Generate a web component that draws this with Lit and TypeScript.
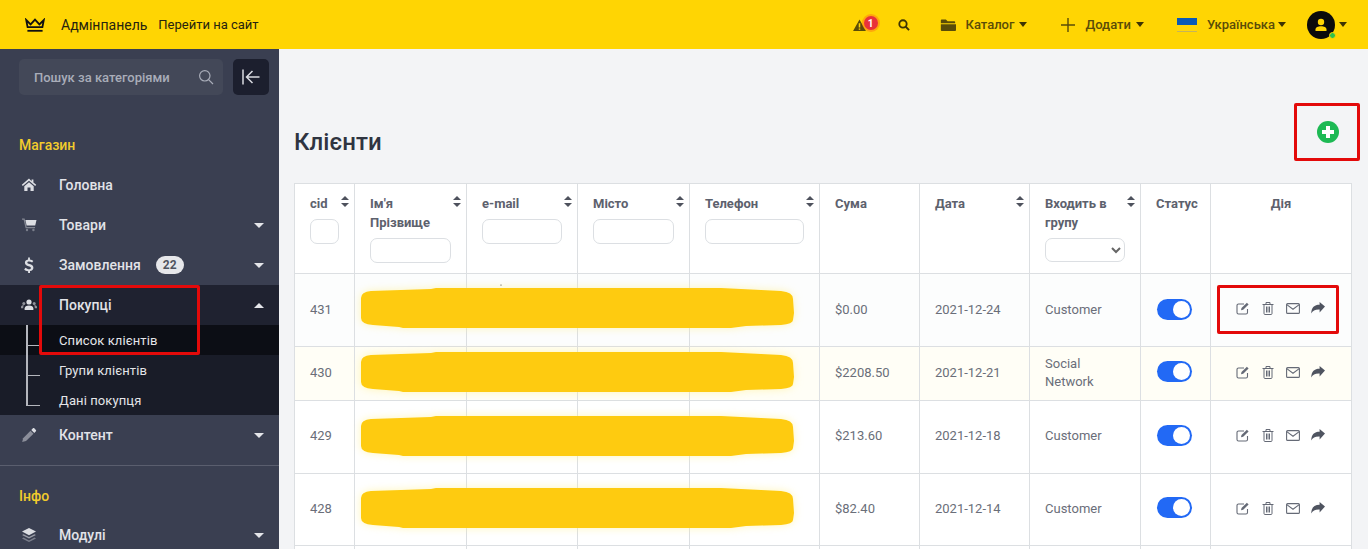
import { LitElement, html, css, svg } from "lit";
import { customElement } from "lit/decorators.js";

const icons: Record<string, unknown> = {
  home: svg`<path d="M8 1.600 0.800 7.800l1 1.100L8 3.700l6.200 5.200 1-1.100-2.800-2.400V2.400h-1.800v1.900z" fill="currentColor"/><path d="M3.300 9.200 8 5.300l4.700 3.900V14H9.500v-3.400h-3V14H3.300z" fill="currentColor"/>`,
  cart: svg`<path d="M1 1.500h2.600l2 8.500h8.400v1.200H4.600L2.600 2.700H1z" fill="currentColor" opacity=".45"/><path d="M4.400 3H15.500l-1.300 5.600H5.600z" fill="currentColor"/><circle cx="6" cy="13" r="1.200" fill="currentColor" opacity=".4"/><circle cx="12.400" cy="13" r="1.200" fill="currentColor" opacity=".4"/>`,
  dollar: svg`<path d="M7.100 0.600h1.800v1.900c1.500.2 2.700.8 3.400 1.500l-1.200 1.600c-.9-.7-2-1.200-3.100-1.200-1 0-1.700.4-1.700 1.100 0 .8.8 1.100 2.300 1.600 2.100.7 3.800 1.500 3.800 3.600 0 1.800-1.300 3-3.400 3.400v2.100H7.100v-2c-1.600-.2-3-.9-3.900-1.800l1.300-1.700c1 .9 2.300 1.500 3.500 1.500 1.100 0 1.900-.5 1.900-1.300 0-.9-.9-1.200-2.400-1.700-2-.7-3.600-1.500-3.600-3.500 0-1.700 1.200-2.900 3.200-3.200z" fill="currentColor"/>`,
  users: svg`<circle cx="8" cy="5" r="2.600" fill="currentColor"/><path d="M3.600 13v-1.600C3.600 9.400 5.400 8.400 8 8.400s4.400 1 4.400 3V13z" fill="currentColor"/><circle cx="2.800" cy="6.400" r="1.500" fill="currentColor" opacity=".6"/><circle cx="13.200" cy="6.400" r="1.500" fill="currentColor" opacity=".6"/><path d="M0 11.200V9.900c0-1 1-1.600 2.900-1.600-.4.5-.6 1.100-.7 2.900zM16 11.200V9.900c0-1-1-1.600-2.900-1.600.4.5.6 1.100.7 2.900z" fill="currentColor" opacity=".6"/>`,
  pencil: svg`<path d="M1.200 15l.9-3.800 7.400-7.500 3 3-7.500 7.400z" fill="currentColor" opacity=".5"/><path d="M10.300 2.900l1.600-1.600c.4-.4 1-.4 1.400 0l1.600 1.600c.4.4.4 1 0 1.400l-1.600 1.600z" fill="currentColor"/>`,
  layers: svg`<path d="M8 1 15 4.600 8 8.200 1 4.600z" fill="currentColor"/><path d="M2.600 7.200 1 8l7 3.600L15 8l-1.600-.8L8 10z" fill="currentColor" opacity=".6"/><path d="M2.600 10.600 1 11.400 8 15l7-3.600-1.600-.8L8 13.400z" fill="currentColor" opacity=".4"/>`,
};

const groups = [
  { label: "Головна", icon: "home" },
  { label: "Товари", icon: "cart", caret: "down" },
  { label: "Замовлення", icon: "dollar", caret: "down", badge: "22" },
  { label: "Покупці", icon: "users", caret: "up", open: true },
];

const rows = [
  { cls: "r1", cid: "431", sum: "$0.00", date: "2021-12-24", grp: "Customer", dot: true },
  { cls: "r2", cid: "430", sum: "$2208.50", date: "2021-12-21", grp: "Social Network" },
  { cls: "r3", cid: "429", sum: "$213.60", date: "2021-12-18", grp: "Customer" },
  { cls: "r3 r4", cid: "428", sum: "$82.40", date: "2021-12-14", grp: "Customer" },
];

const cols = [60, 112, 111, 112, 130, 100, 110, 111, 70, 141];

@customElement("app-root")
export class AppRoot extends LitElement {
  static styles = css`
    :host { display: block; position: relative; height: 549px; overflow: hidden; font-family: Roboto, "Noto Sans", sans-serif; background: #f3f4f6; }
    * { box-sizing: border-box; }
    svg { display: block; flex: none; }
    .top { height: 49px; background: #ffd503; display: flex; align-items: center; color: #2b2500; }
    .crown { margin-left: 25px; margin-right: 16px; }
    .brand { font-size: 14px; color: #26230f; margin-right: 11px; }
    .visit { font-size: 13px; color: #26230f; }
    .right { margin-left: auto; display: flex; align-items: center; padding-right: 21px; color: #5a4c08; font-size: 13px; font-weight: 500; }
    .alert { display: flex; margin-right: 19px; position: relative; width: 26px; height: 15px; }
    .count { position: absolute; left: 11px; top: -1px; width: 14px; height: 14px; border-radius: 50%; background: #e8323a; color: #fff; font-size: 10px; font-weight: 700; display: flex; align-items: center; justify-content: center; box-shadow: 0 0 0 2px rgba(255, 130, 20, .55); }
    .mag { margin-right: 30px; color: #3d3303; }
    .folder { margin-right: 10px; }
    .caret { width: 0; height: 0; border-left: 4px solid transparent; border-right: 4px solid transparent; border-top: 5px solid #3d3303; margin-left: 5px; }
    .catalog { margin-right: 34px; }
    .cat { display: flex; align-items: center; }
    .plus { margin-right: 10px; }
    .flag { width: 20px; height: 14px; margin-right: 10px; margin-left: 33px; display: flex; flex-direction: column; }
    .flag i { display: block; height: 7px; background: #0a5ab8; }
    .flag b { display: block; height: 7px; background: #ffd60a; border-bottom: 1px solid #c5b45a; }
    .lang .caret { margin-left: 3px; }
    .avatar { margin-left: 21px; width: 28px; height: 28px; border-radius: 50%; background: #0b0b0b; position: relative; display: flex; align-items: center; justify-content: center; }
    .online { position: absolute; right: -1px; bottom: 0; width: 7px; height: 7px; border-radius: 50%; background: #2fc24c; border: 1px solid #ffd503; }
    .avcaret { margin-left: 4px; }

    .body { display: flex; height: 500px; }
    .side { width: 279px; flex: none; background: #3a3f51; color: #e4e5e9; overflow: hidden; }
    .searchrow { display: flex; gap: 10px; padding: 10px 10px 0 19px; }
    .search { flex: 1; height: 36px; background: #434858; border-radius: 5px; display: flex; align-items: center; justify-content: space-between; padding: 0 9px 0 15px; font-size: 13px; font-weight: 500; color: #a9adb9; }
    .collapse { width: 36px; height: 36px; border-radius: 5px; background: #1c1f2e; display: flex; align-items: center; justify-content: center; color: #d9dbe1; }
    .sect { padding-left: 19px; color: #f2cc2c; font-size: 14px; font-weight: 500; height: 20px; line-height: 20px; }
    .sect.first { margin-top: 40px; margin-bottom: 10px; }
    .sect.second { margin-top: 20px; margin-bottom: 9px; }
    .item { height: 40px; display: flex; align-items: center; padding-left: 21px; font-size: 14px; font-weight: 500; color: #e2e3e8; }
    .item.open { background: #1f2230; }
    .item .ic { width: 16px; margin-right: 22px; color: #dcdee3; }
    .badge { margin-left: 15px; width: 28px; height: 18px; line-height: 18px; text-align: center; font-size: 12px; font-weight: 700; background: #e6e7ea; color: #50545f; border-radius: 9px; }
    .arr { margin-left: auto; margin-right: 15px; width: 0; height: 0; border-left: 5px solid transparent; border-right: 5px solid transparent; }
    .arr.down { border-top: 5px solid #e4e5e9; }
    .arr.up { border-bottom: 5px solid #e4e5e9; }
    .subs { background: #191c28; }
    .sub { height: 30px; display: flex; align-items: center; padding-left: 59px; font-size: 13px; color: #e4e5e9; position: relative; letter-spacing: .1px; }
    .sub.on { background: #0c0e15; }
    .sub::before { content: ""; position: absolute; left: 26px; top: 0; width: 12px; height: 20px; border-left: 2px solid #b4b6bd; border-bottom: 1px solid #b4b6bd; }
    .sub:not(:last-child)::after { content: ""; position: absolute; left: 26px; top: 20px; height: 10px; border-left: 2px solid #b4b6bd; }
    .rule { height: 1px; background: #5a5e6e; margin-top: 10px; }

    .main { flex: 1; min-width: 0; padding: 54px 8px 0 15px; position: relative; }
    .head { height: 58px; display: flex; justify-content: space-between; margin-bottom: 22px; }
    h1 { margin: 0; align-self: flex-end; font-size: 24px; line-height: 28px; font-weight: 500; color: #2f3441; padding-bottom: 5px; letter-spacing: .05px; }
    .add { width: 66px; height: 58px; border: 3px solid #e30a0a; border-radius: 2px; display: flex; justify-content: center; padding: 15px 0 0 2px; }
    table { border-collapse: collapse; table-layout: fixed; width: 1057px; background: #fff; font-size: 13px; color: #6a6e79; }
    th, td { border: 1px solid #dcdfe2; }
    th { height: 90px; vertical-align: top; text-align: left; padding: 10px 15px 0 15px; font-weight: 700; line-height: 19px; color: #5d616d; position: relative; }
    th.center { text-align: center; }
    .sort { position: absolute; right: 5px; top: 12px; }
    th input, th select { display: block; width: 100%; height: 25px; margin-top: 6px; border: 1px solid #dcdfe3; border-radius: 7px; background: #fff; padding: 0; color: #666; }
    th select { height: 24px; }
    td { padding: 0 14px 0 15px; line-height: 18px; }
    tr.r1 { height: 73px; background: #fcfdfd; }
    tr.r2 { height: 54px; background: #fffef6; }
    tr.r3 { height: 73px; background: #fff; }
    tr.r4 { height: 72px; }
    tr.r2 td, tr.r3 td { padding-bottom: 2px; }
    tr.blank { height: 40px; }
    .name { position: relative; }
    .ink { position: absolute; left: 6px; top: 50%; margin-top: -22.500px; overflow: visible; filter: drop-shadow(0 0 4px rgba(255, 240, 140, .6)); }
    tr.r1 .ink { margin-top: -23.500px; }
    .tog { width: 35px; height: 21px; border-radius: 11px; background: #2269f5; position: relative; margin: -2px auto 0; }
    .tog::after { content: ""; position: absolute; right: 2px; top: 2px; width: 17px; height: 17px; border-radius: 50%; background: #fff; }
    td.togcell { padding: 0 9px 0 7px; }
    .acts { display: flex; align-items: center; color: #656a76; padding-left: 10px; gap: 11px; margin-bottom: 2px; }
    tr.r1 .acts { margin-bottom: 4px; }
    .redbox { position: absolute; border: 3px solid #e30a0a; border-radius: 2px; pointer-events: none; }
    .redbox.nav { left: 39px; top: 285px; width: 161px; height: 70px; }
    .redbox.action { left: 938px; top: 236px; width: 122px; height: 49px; }
  `;

  private sortIcon() {
    return html`<svg class="sort" width="8" height="11" viewBox="0 0 8 11"><path d="M4 0l4 4H0zM4 11 0 7h8z" fill="#4e525d"/></svg>`;
  }

  private sidebarItem(it: any) {
    return html`<div class="item ${it.open ? "open" : ""}">
      <svg class="ic" width="16" height="16" viewBox="0 0 16 16">${icons[it.icon]}</svg>
      <span>${it.label}</span>
      ${it.badge ? html`<span class="badge">${it.badge}</span>` : ""}
      ${it.caret ? html`<span class="arr ${it.caret}"></span>` : ""}
    </div>`;
  }

  private actions() {
    return html`<div class="acts">
      <svg width="14" height="14" viewBox="0 0 14 14" fill="none" stroke="currentColor" stroke-width="1.100"><path d="M11.500 8v3.500a1.500 1.500 0 0 1-1.500 1.500H2.500A1.500 1.500 0 0 1 1 11.500v-7A1.500 1.500 0 0 1 2.500 3H8"/><path d="M5 9.300l.5-2.200L10.900 1.700l1.700 1.700-5.400 5.400z" fill="currentColor" stroke="none"/></svg>
      <svg width="14" height="14" viewBox="0 0 14 14" fill="none" stroke="currentColor" stroke-width="1"><path d="M1.500 3.500h11M5 3.500V1.500h4v2M3 3.500v9a1 1 0 0 0 1 1h6a1 1 0 0 0 1-1v-9M5.500 5.500v6M7 5.500v6M8.500 5.500v6"/></svg>
      <svg width="14" height="14" viewBox="0 0 14 14" fill="none" stroke="currentColor" stroke-width="1.100"><rect x=".6" y="2.600" width="12.800" height="9.800" rx="1"/><path d="M.8 3.600 7 8.200l6.200-4.600"/></svg>
      <svg width="14" height="14" viewBox="0 0 14 14"><path d="M14 5.500 8.600 1v2.800C3.400 3.800.4 6.400.2 12.600c1.500-3 4-4.300 8.400-4.100v3z" fill="#4f5460"/></svg>
    </div>`;
  }

  render() {
    const heads = [
      ["cid", 1, 1], ["Ім'я Прізвище", 1, 1], ["e-mail", 1, 1], ["Місто", 1, 1], ["Телефон", 1, 1],
      ["Сума", 0, 0], ["Дата", 1, 0], ["Входить в групу", 1, 2], ["Статус", 0, 0], ["Дія", 0, 0],
    ] as const;
    return html`
      <div class="top">
        <svg class="crown" width="20" height="14" viewBox="0 0 20 14" fill="none" stroke="#111" stroke-width="1.800"><path d="M1.200 2 5.600 6.400 10 1.600l4.400 4.800L18.800 2l-1.400 7.200H2.600z"/><path d="M2.400 12.800h15.200"/></svg>
        <span class="brand">Адмінпанель</span>
        <span class="visit">Перейти на сайт</span>
        <div class="right">
          <div class="alert">
            <svg width="13" height="12" viewBox="0 0 15 14" style="margin-top:2px"><path d="M7.500.5 15 14H0zM6.600 5v5h1.800V5zm0 6v1.600h1.800V11z" fill="#5a4c08" fill-rule="evenodd"/></svg>
            <span class="count">1</span>
          </div>
          <svg class="mag" width="12" height="12" viewBox="0 0 13 13" fill="none" stroke="currentColor" stroke-width="2"><circle cx="5.400" cy="5.400" r="4"/><path d="M8.400 8.400 12 12"/></svg>
          <svg class="folder" width="16" height="12" viewBox="0 0 19 14"><path d="M1 1.500A1 1 0 0 1 2 .5h5l2 2h8a1 1 0 0 1 1 1V5H1z" fill="#5a4c08"/><path d="M1 6h18v7a1 1 0 0 1-1 1H2a1 1 0 0 1-1-1z" fill="#5a4c08"/></svg>
          <span class="cat catalog">Каталог<span class="caret"></span></span>
          <svg class="plus" width="14" height="14" viewBox="0 0 16 16"><path d="M7.200 0h1.600v7.200H16v1.600H8.800V16H7.200V8.800H0V7.200h7.200z" fill="#5a4c08"/></svg>
          <span class="cat">Додати<span class="caret"></span></span>
          <div class="flag"><i></i><b></b></div>
          <span class="cat lang">Українська<span class="caret"></span></span>
          <div class="avatar">
            <svg width="16" height="16" viewBox="0 0 16 16"><circle cx="8" cy="5" r="3.200" fill="#ffd503"/><path d="M2.500 14v-1.500C2.500 10.300 5 9.300 8 9.300s5.500 1 5.500 3.200V14z" fill="#ffd503"/></svg>
            <span class="online"></span>
          </div>
          <span class="caret avcaret"></span>
        </div>
      </div>
      <div class="body">
        <aside class="side">
          <div class="searchrow">
            <div class="search">
              <span>Пошук за категоріями</span>
              <svg width="16" height="16" viewBox="0 0 16 16" fill="none" stroke="#a9adb9" stroke-width="1.200"><circle cx="6.800" cy="6.800" r="5.200"/><path d="M10.600 10.600 15 15"/></svg>
            </div>
            <div class="collapse">
              <svg width="18" height="16" viewBox="0 0 18 16" fill="none" stroke="currentColor" stroke-width="1.500"><path d="M1 0.500v15M17.500 8H5M10.500 2 4.500 8l6 6"/></svg>
            </div>
          </div>
          <div class="sect first">Магазин</div>
          ${groups.map((g) => this.sidebarItem(g))}
          <div class="subs">
            <div class="sub on">Список клієнтів</div>
            <div class="sub">Групи клієнтів</div>
            <div class="sub">Дані покупця</div>
          </div>
          ${this.sidebarItem({ label: "Контент", icon: "pencil", caret: "down" })}
          <div class="rule"></div>
          <div class="sect second">Інфо</div>
          ${this.sidebarItem({ label: "Модулі", icon: "layers", caret: "down" })}
        </aside>
        <main class="main">
          <div class="head">
            <h1>Клієнти</h1>
            <div class="add">
              <svg width="22" height="22" viewBox="0 0 22 22"><circle cx="11" cy="11" r="11" fill="#1db954"/><path d="M9 5h4v4h4v4h-4v4H9v-4H5V9h4z" fill="#fff"/></svg>
            </div>
          </div>
          <table>
            <colgroup>${cols.map((w) => html`<col style="width:${w}px" />`)}</colgroup>
            <thead>
              <tr>
                ${heads.map(
                  ([t, s, f], i) => html`<th class="${i === 9 ? "center" : ""}">
                    ${t}${s ? this.sortIcon() : ""}
                    ${f === 1 ? html`<input />` : f === 2 ? html`<select><option></option></select>` : ""}
                  </th>`
                )}
              </tr>
            </thead>
            <tbody>
              ${rows.map(
                (r) => html`<tr class="${r.cls}">
                  <td>${r.cid}</td>
                  <td class="name">
                    <svg class="ink" width="433" height="42" viewBox="0 0 433 42">
                      ${r.dot ? svg`<circle cx="140" cy="-2" r=".6" fill="#333"/>` : ""}
                      <path d="M0 11Q0 5 10 4L70 2 75 1 360 1 400 3 420 4Q432 5 432 12L433 26 432 33Q432 37 420 38L385 39 370 41 42 41 38 40 12 38Q0 37 0 31Z" fill="#fecb10"/>
                    </svg>
                  </td>
                  <td></td><td></td><td></td>
                  <td>${r.sum}</td>
                  <td>${r.date}</td>
                  <td>${r.grp}</td>
                  <td class="togcell"><div class="tog"></div></td>
                  <td>${this.actions()}</td>
                </tr>`
              )}
              <tr class="blank">${cols.map(() => html`<td></td>`)}</tr>
            </tbody>
          </table>
          <div class="redbox action"></div>
        </main>
      </div>
      <div class="redbox nav"></div>
    `;
  }
}
